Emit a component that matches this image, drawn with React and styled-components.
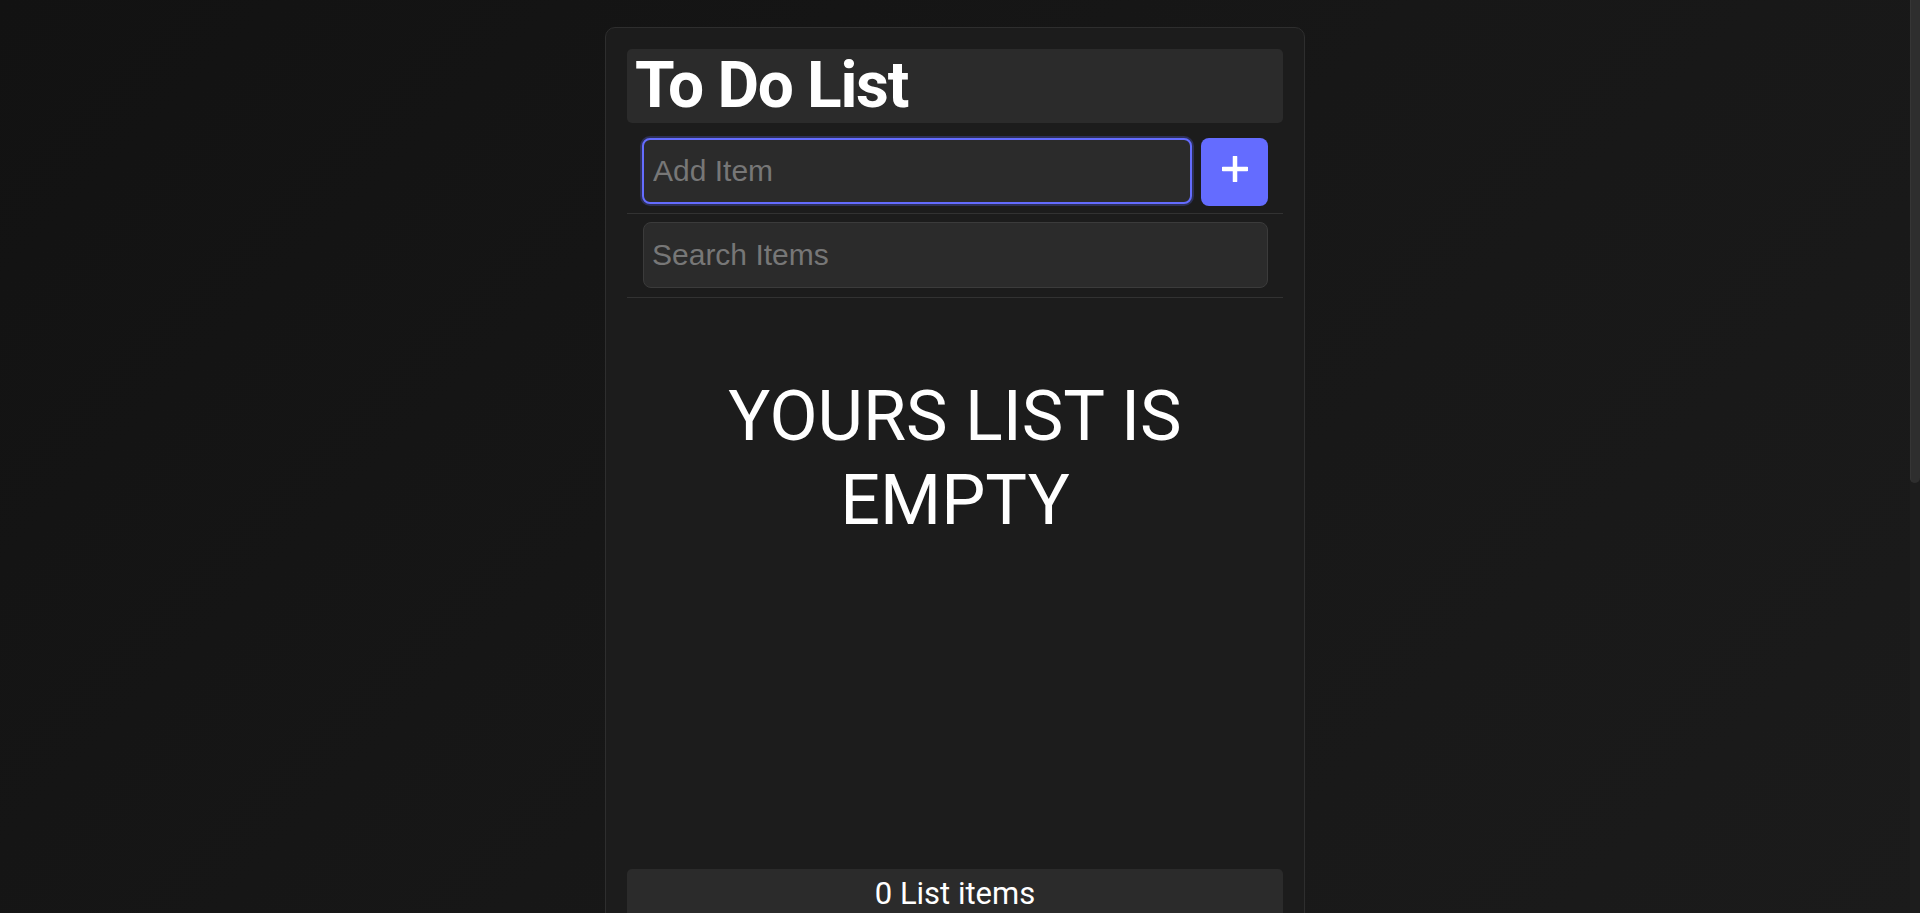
import React, { useState } from "react";
import styled, { createGlobalStyle } from "styled-components";

const GlobalStyle = createGlobalStyle`
  html, body {
    margin: 0;
    padding: 0;
  }
  body {
    background: linear-gradient(135deg, #121212 0%, #171717 50%, #1b1b1b 100%) fixed;
    color: #ffffff;
    font-family: Roboto, "Liberation Sans", Arial, sans-serif;
  }
`;

const Page = styled.div`
  display: flex;
  justify-content: center;
  padding: 27px 10px 27px 0;
`;

const ScrollTrack = styled.div`
  position: fixed;
  top: 0;
  right: 0;
  width: 10px;
  height: 100vh;
  background: #1d1d1d;
`;

const ScrollThumb = styled.div`
  width: 10px;
  height: 483px;
  box-sizing: border-box;
  background: #2e2e2e;
  border-left: 1px solid #363636;
  border-radius: 0 0 5px 5px;
`;

const Card = styled.div`
  box-sizing: border-box;
  width: 700px;
  min-height: 1672px;
  background: #1c1c1c;
  border: 1px solid #2e2e2e;
  border-radius: 10px;
  padding: 21px;
  display: flex;
  flex-direction: column;
`;

const Header = styled.header`
  background: #2b2b2b;
  border-radius: 5px;
  height: 74px;
  padding: 0 8px;
  display: flex;
  align-items: center;
`;

const Title = styled.h1`
  margin: 0;
  font-family: Roboto, sans-serif;
  font-weight: 700;
  font-size: 64px;
  line-height: 74px;
  letter-spacing: -1.3px;
  color: #ffffff;
`;

const Form = styled.form`
  display: flex;
  gap: ${(p) => p.$gap || 0}px;
  padding: ${(p) => p.$pad};
  border-bottom: 1px solid #323232;
`;

const TextInput = styled.input`
  flex: 1;
  box-sizing: border-box;
  height: 66px;
  margin: 0;
  background: #2b2b2b;
  color: #ffffff;
  border: ${(p) => (p.$focused ? "2px solid #646cff" : "1px solid #3b3b3b")};
  box-shadow: ${(p) => (p.$focused ? "0 0 0 2px #2d3058" : "none")};
  border-radius: 8px;
  outline: none;
  padding: 0 ${(p) => (p.$focused ? 9 : 8)}px;
  font-family: "Liberation Sans", Arial, sans-serif;
  font-size: 30px;
  caret-color: #ffffff;

  &::placeholder {
    color: #777777;
  }
`;

const AddButton = styled.button`
  box-sizing: border-box;
  width: 67px;
  height: 68px;
  margin: 0;
  border: none;
  border-radius: 8px;
  background: #646cff;
  color: #ffffff;
  display: flex;
  align-items: center;
  justify-content: center;
  padding: 0 0 6px;
  cursor: pointer;
`;

const Main = styled.main`
  height: 571px;
  display: flex;
  flex-direction: column;
  align-items: center;
`;

const EmptyMessage = styled.p`
  margin: 76px 0 0;
  font-family: Roboto, sans-serif;
  font-weight: 400;
  font-size: 70px;
  line-height: 84px;
  text-align: center;
  color: #ffffff;
`;

const Footer = styled.footer`
  background: #2b2b2b;
  border-radius: 5px;
  padding: 6px 0 8px;
  text-align: center;
  font-family: Roboto, sans-serif;
  font-size: 31px;
  line-height: normal;
  color: #ffffff;
`;

const PlusIcon = () => (
  <svg width="26" height="26" viewBox="0 0 26 26" aria-hidden="true">
    <path d="M13 1 V25 M1 13 H25" stroke="#ffffff" strokeWidth="4.5" strokeLinecap="round" fill="none" />
  </svg>
);

export default function App() {
  const [items] = useState([]);
  const [newItem, setNewItem] = useState("");
  const [search, setSearch] = useState("");

  return (
    <>
      <GlobalStyle />
      <Page>
        <Card>
          <Header>
            <Title>To Do List</Title>
          </Header>
          <Form $gap={9} $pad="15px 15px 7px 15px" onSubmit={(e) => e.preventDefault()}>
            <TextInput
              $focused
              autoFocus
              placeholder="Add Item"
              value={newItem}
              onChange={(e) => setNewItem(e.target.value)}
            />
            <AddButton type="submit" aria-label="Add Item">
              <PlusIcon />
            </AddButton>
          </Form>
          <Form $pad="8px 15px 9px 16px" onSubmit={(e) => e.preventDefault()}>
            <TextInput
              placeholder="Search Items"
              value={search}
              onChange={(e) => setSearch(e.target.value)}
            />
          </Form>
          <Main>
            {items.length === 0 && <EmptyMessage>YOURS LIST IS EMPTY</EmptyMessage>}
          </Main>
          <Footer>{items.length} List items</Footer>
        </Card>
      </Page>
      <ScrollTrack aria-hidden="true">
        <ScrollThumb />
      </ScrollTrack>
    </>
  );
}
